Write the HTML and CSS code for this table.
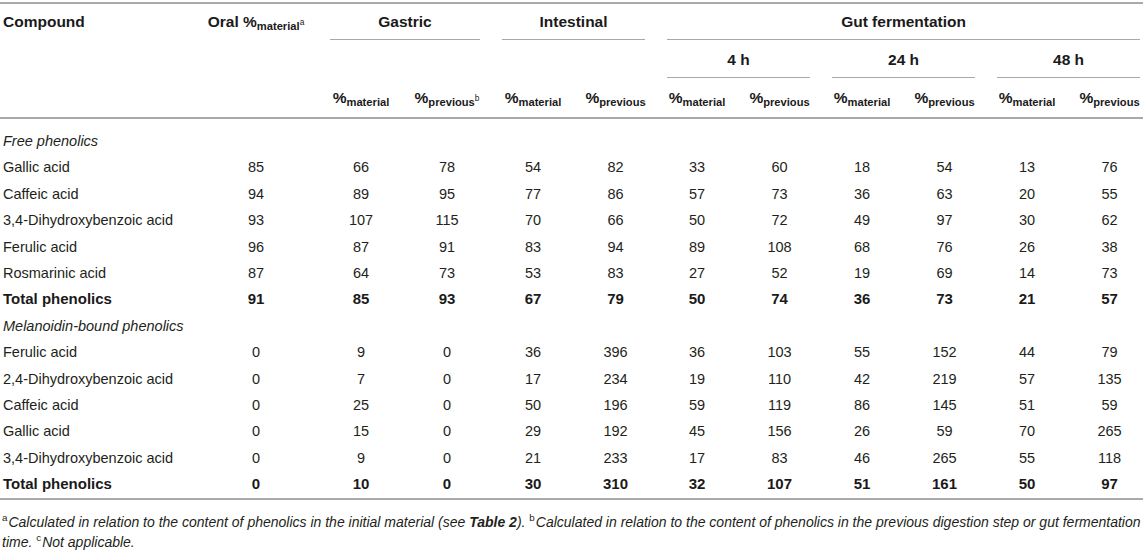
FILE: index.html
```html
<!DOCTYPE html>
<html>
<head>
<meta charset="utf-8">
<link rel="stylesheet" href="styles.css">
</head>
<body>
<div class="frame">
<table class="data">
  <colgroup>
    <col class="c-name"><col class="c-oral">
    <col class="c84"><col class="c88"><col class="c84"><col class="c81">
    <col class="c82"><col class="c83"><col class="c82"><col class="c83"><col class="c82"><col class="c83">
  </colgroup>
  <thead>
    <tr class="h1">
      <th rowspan="3" class="name-h">Compound</th>
      <th rowspan="3" class="oral-h">Oral %<span class="sb">material<sup class="sp">a</sup></span></th>
      <th colspan="2"><div class="grp">Gastric</div></th>
      <th colspan="2"><div class="grp">Intestinal</div></th>
      <th colspan="6"><div class="grp">Gut fermentation</div></th>
    </tr>
    <tr class="h2">
      <th colspan="2"></th>
      <th colspan="2"></th>
      <th colspan="2"><div class="grp2">4 h</div></th>
      <th colspan="2"><div class="grp2">24 h</div></th>
      <th colspan="2"><div class="grp2">48 h</div></th>
    </tr>
    <tr class="h3">
      <th>%<span class="sb">material</span></th>
      <th>%<span class="sb">previous<sup class="sp">b</sup></span></th>
      <th>%<span class="sb">material</span></th>
      <th>%<span class="sb">previous</span></th>
      <th>%<span class="sb">material</span></th>
      <th>%<span class="sb">previous</span></th>
      <th>%<span class="sb">material</span></th>
      <th>%<span class="sb">previous</span></th>
      <th>%<span class="sb">material</span></th>
      <th>%<span class="sb">previous</span></th>
    </tr>
  </thead>
  <tbody>
    <tr class="sect first"><td colspan="12">Free phenolics</td></tr>
    <tr><td>Gallic acid</td><td>85</td><td>66</td><td>78</td><td>54</td><td>82</td><td>33</td><td>60</td><td>18</td><td>54</td><td>13</td><td>76</td></tr>
    <tr><td>Caffeic acid</td><td>94</td><td>89</td><td>95</td><td>77</td><td>86</td><td>57</td><td>73</td><td>36</td><td>63</td><td>20</td><td>55</td></tr>
    <tr><td>3,4-Dihydroxybenzoic acid</td><td>93</td><td>107</td><td>115</td><td>70</td><td>66</td><td>50</td><td>72</td><td>49</td><td>97</td><td>30</td><td>62</td></tr>
    <tr><td>Ferulic acid</td><td>96</td><td>87</td><td>91</td><td>83</td><td>94</td><td>89</td><td>108</td><td>68</td><td>76</td><td>26</td><td>38</td></tr>
    <tr><td>Rosmarinic acid</td><td>87</td><td>64</td><td>73</td><td>53</td><td>83</td><td>27</td><td>52</td><td>19</td><td>69</td><td>14</td><td>73</td></tr>
    <tr class="total"><td>Total phenolics</td><td>91</td><td>85</td><td>93</td><td>67</td><td>79</td><td>50</td><td>74</td><td>36</td><td>73</td><td>21</td><td>57</td></tr>
    <tr class="sect"><td colspan="12">Melanoidin-bound phenolics</td></tr>
    <tr><td>Ferulic acid</td><td>0</td><td>9</td><td>0</td><td>36</td><td>396</td><td>36</td><td>103</td><td>55</td><td>152</td><td>44</td><td>79</td></tr>
    <tr><td>2,4-Dihydroxybenzoic acid</td><td>0</td><td>7</td><td>0</td><td>17</td><td>234</td><td>19</td><td>110</td><td>42</td><td>219</td><td>57</td><td>135</td></tr>
    <tr><td>Caffeic acid</td><td>0</td><td>25</td><td>0</td><td>50</td><td>196</td><td>59</td><td>119</td><td>86</td><td>145</td><td>51</td><td>59</td></tr>
    <tr><td>Gallic acid</td><td>0</td><td>15</td><td>0</td><td>29</td><td>192</td><td>45</td><td>156</td><td>26</td><td>59</td><td>70</td><td>265</td></tr>
    <tr><td>3,4-Dihydroxybenzoic acid</td><td>0</td><td>9</td><td>0</td><td>21</td><td>233</td><td>17</td><td>83</td><td>46</td><td>265</td><td>55</td><td>118</td></tr>
    <tr class="total last"><td>Total phenolics</td><td>0</td><td>10</td><td>0</td><td>30</td><td>310</td><td>32</td><td>107</td><td>51</td><td>161</td><td>50</td><td>97</td></tr>
  </tbody>
</table>
</div>
<p class="notes"><sup class="fn">a</sup>Calculated in relation to the content of phenolics in the initial material (see <b>Table 2</b>). <sup class="fn">b</sup>Calculated in relation to the content of phenolics in the previous digestion step or gut fermentation<br>time. <sup class="fn">c</sup>Not applicable.</p>
</body>
</html>
```

FILE: styles.css
```css
html, body {
  margin: 0;
  padding: 0;
  background: #ffffff;
  overflow: hidden;
}

body {
  font-family: "Liberation Sans", Arial, sans-serif;
  color: #231f20;
  width: 1143px;
}

.frame {
  width: 1143px;
  overflow: hidden;
  padding-top: 2px;
}

.data {
  width: 1151px;
  table-layout: fixed;
  border-collapse: collapse;
  border-top: 2px solid #a9a9a9;
}

.c-name { width: 193px; }
.c-oral { width: 126px; }
.c84 { width: 84px; }
.c88 { width: 88px; }
.c81 { width: 81px; }
.c82 { width: 82px; }
.c83 { width: 83px; }

th {
  padding: 0;
  font-weight: bold;
  font-size: 15.5px;
  color: #1a1a1a;
  text-align: center;
  vertical-align: top;
  white-space: nowrap;
}

.h1 th { height: 36px; }
.h2 th { height: 38px; }
.h3 th {
  height: 39px;
  line-height: 39px;
  border-bottom: 2px solid #a9a9a9;
  vertical-align: middle;
}

.name-h,
.oral-h {
  line-height: 36px;
  border-bottom: 2px solid #a9a9a9;
}

.name-h {
  text-align: left;
  padding-left: 3px;
}

.grp {
  margin: 0 11px;
  height: 35px;
  line-height: 35px;
  border-bottom: 1px solid #a9a9a9;
}

.grp2 {
  margin: 0 11px;
  height: 37px;
  line-height: 39px;
  border-bottom: 1px solid #a9a9a9;
}

.sb {
  font-size: 0.72em;
  vertical-align: -0.3em;
  line-height: 0;
}

.sp {
  font-size: 0.75em;
  vertical-align: 0.55em;
  line-height: 0;
  font-weight: normal;
}

td {
  padding: 0;
  height: 26.4px;
  line-height: 26.4px;
  font-size: 14.5px;
  text-align: center;
  white-space: nowrap;
}

td:first-child {
  text-align: left;
  padding-left: 3px;
}

.first td {
  padding-top: 9px;
}

.sect td {
  font-style: italic;
}

.total td {
  font-weight: bold;
  font-size: 15px;
  color: #1a1a1a;
}

.last td {
  border-bottom: 2px solid #a9a9a9;
}

.notes {
  margin: 12px 0 0 0;
  padding-left: 2px;
  font-size: 14px;
  line-height: 20px;
  font-style: italic;
  white-space: nowrap;
}

.notes b {
  font-weight: bold;
}

.fn {
  font-size: 0.7em;
  vertical-align: 0.55em;
  line-height: 0;
  font-style: normal;
  margin-right: 1px;
}
```
